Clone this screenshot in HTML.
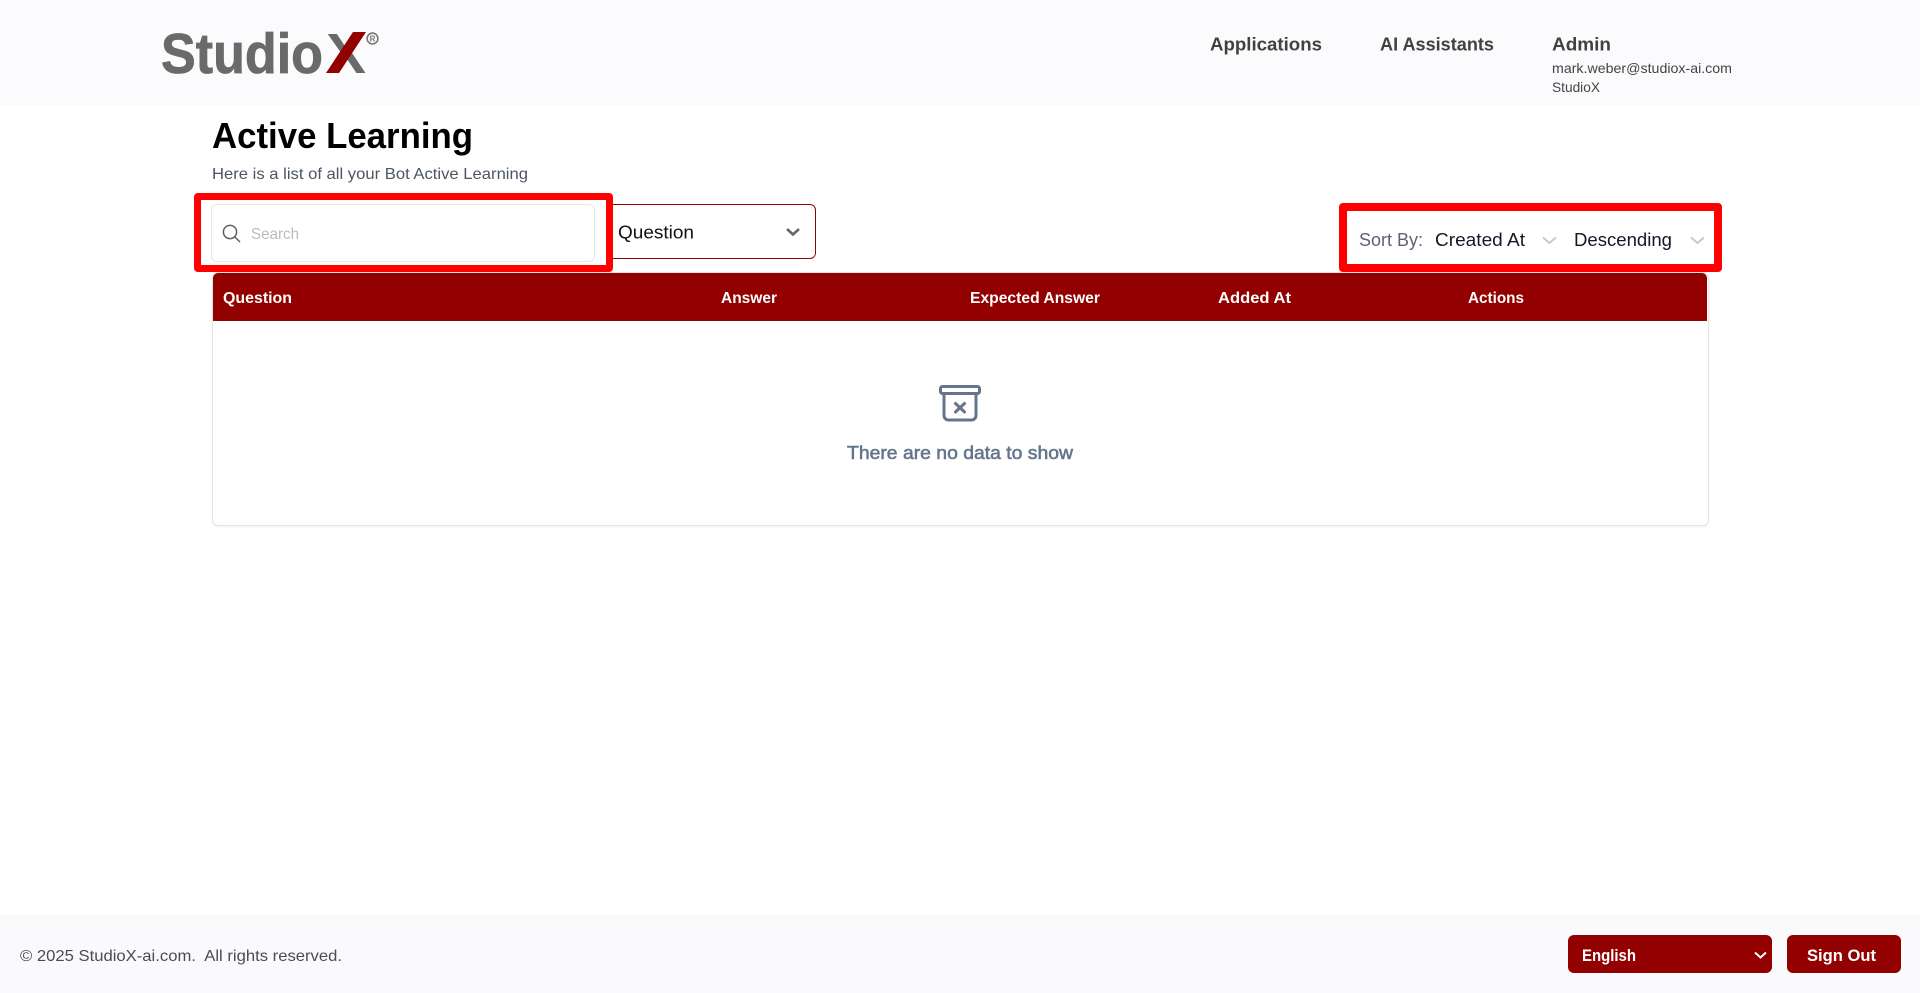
<!DOCTYPE html>
<html lang="en">
<head>
<meta charset="utf-8">
<title>Active Learning</title>
<style>
html,body{margin:0;padding:0;width:1920px;height:993px;overflow:hidden;background:#fff;font-family:"Liberation Sans",sans-serif}
.b{position:absolute;box-sizing:border-box}
svg{position:absolute;left:0;top:0}
text{font-family:"Liberation Sans",sans-serif}
.w{font-weight:700}
</style>
</head>
<body>
<header class="b" style="left:0;top:0;width:1920px;height:106px;background:#fbfbfe"></header>
<footer class="b" style="left:0;top:915px;width:1920px;height:78px;background:#fafafd"></footer>

<div class="b" style="left:212px;top:272px;width:1497px;height:254px;border:1px solid #e2e4e9;border-radius:6px;box-shadow:0 1px 2px rgba(0,0,0,.06);background:#fff"></div>
<div class="b" style="left:213px;top:273px;width:1494px;height:48px;background:#920000;border-radius:5px 5px 0 0"></div>

<div class="b" style="left:590px;top:204px;width:226px;height:55px;border:1px solid #920000;border-radius:6px;background:#fff"></div>
<div class="b" style="left:194px;top:193px;width:419px;height:79px;border:7.5px solid #fe0000;border-radius:4px;background:#fff"></div>
<div class="b" style="left:211px;top:204px;width:384px;height:58px;border:1px solid #e5e7eb;border-radius:6px;background:#fff"></div>
<div class="b" style="left:1339px;top:203px;width:383px;height:69px;border:8px solid #fe0000;border-radius:4px"></div>

<div class="b" style="left:1568px;top:935px;width:204px;height:38px;background:#920000;border-radius:6px"></div>
<div class="b" style="left:1787px;top:935px;width:114px;height:38px;background:#920000;border-radius:6px"></div>

<svg width="1920" height="993" viewBox="0 0 1920 993" xmlns="http://www.w3.org/2000/svg">
  <!-- logo -->
  <text x="161" y="73" font-size="57" class="w" fill="#6a6a6a" stroke="#6a6a6a" stroke-width=".8" textLength="162" lengthAdjust="spacingAndGlyphs">Studio</text>
  <text x="326" y="73" font-size="57" class="w" fill="#6a6a6a" textLength="40" lengthAdjust="spacingAndGlyphs">X</text>
  <polygon points="353,32 366,32 339,73 326,73" fill="#920000"/>
  <circle cx="372.5" cy="38.5" r="5.4" fill="none" stroke="#777" stroke-width="1.6"/>
  <text x="369.6" y="41.6" font-size="8" class="w" fill="#777" textLength="5.8" lengthAdjust="spacingAndGlyphs">R</text>

  <!-- nav -->
  <text x="1210" y="50.5" font-size="18" class="w" fill="#454040" textLength="112" lengthAdjust="spacingAndGlyphs">Applications</text>
  <text x="1380" y="50.5" font-size="18" class="w" fill="#454040" textLength="114" lengthAdjust="spacingAndGlyphs">AI Assistants</text>
  <text x="1552" y="50.5" font-size="18" class="w" fill="#454040" textLength="59" lengthAdjust="spacingAndGlyphs">Admin</text>
  <text x="1552" y="73" font-size="14" fill="#444" textLength="180" lengthAdjust="spacingAndGlyphs">mark.weber@studiox-ai.com</text>
  <text x="1552" y="92" font-size="14" fill="#444" textLength="48" lengthAdjust="spacingAndGlyphs">StudioX</text>

  <!-- title -->
  <text x="212" y="148" font-size="36" class="w" fill="#000" textLength="261" lengthAdjust="spacingAndGlyphs">Active Learning</text>
  <text x="212" y="179" font-size="16" fill="#4b5563" textLength="316" lengthAdjust="spacingAndGlyphs">Here is a list of all your Bot Active Learning</text>

  <!-- search -->
  <g fill="none" stroke="#5f6368" stroke-width="1.5" stroke-linecap="round">
    <circle cx="230" cy="232" r="6.6"/>
    <path d="M235 237l4.6 4.6"/>
  </g>
  <text x="251" y="239" font-size="16" fill="#b9bcc2" textLength="48" lengthAdjust="spacingAndGlyphs">Search</text>

  <!-- select -->
  <text x="618" y="238.5" font-size="18" fill="#111" textLength="76" lengthAdjust="spacingAndGlyphs">Question</text>
  <path d="M787 229l6 5.5 6-5.5" fill="none" stroke="#666" stroke-width="2.6"/>

  <!-- sort -->
  <text x="1359" y="246" font-size="18" fill="#5b6472" textLength="64" lengthAdjust="spacingAndGlyphs">Sort By:</text>
  <text x="1435" y="246" font-size="18" fill="#111827" textLength="90" lengthAdjust="spacingAndGlyphs">Created At</text>
  <path d="M1543 237.5l6.5 5.5 6.5-5.5" fill="none" stroke="#c6c9d1" stroke-width="2"/>
  <text x="1574" y="246" font-size="18" fill="#111827" textLength="98" lengthAdjust="spacingAndGlyphs">Descending</text>
  <path d="M1691 237.5l6.5 5.5 6.5-5.5" fill="none" stroke="#c6c9d1" stroke-width="2"/>

  <!-- table head -->
  <g font-size="16" class="w" fill="#fff">
    <text x="223" y="303" class="w" textLength="69" lengthAdjust="spacingAndGlyphs">Question</text>
    <text x="721" y="303" class="w" textLength="56" lengthAdjust="spacingAndGlyphs">Answer</text>
    <text x="970" y="303" class="w" textLength="130" lengthAdjust="spacingAndGlyphs">Expected Answer</text>
    <text x="1218" y="303" class="w" textLength="73" lengthAdjust="spacingAndGlyphs">Added At</text>
    <text x="1468" y="303" class="w" textLength="56" lengthAdjust="spacingAndGlyphs">Actions</text>
  </g>

  <!-- empty state -->
  <g fill="none" stroke="#64748b" stroke-width="3" stroke-linecap="round" stroke-linejoin="round">
    <rect x="940.5" y="386.5" width="39" height="7" rx="2"/>
    <path d="M944 394v21.5a4.5 4.5 0 0 0 4.5 4.5h23a4.5 4.5 0 0 0 4.5-4.5V394"/>
    <path d="M955.5 403.5l9 8.5M964.5 403.5l-9 8.5"/>
  </g>
  <text x="847" y="459" font-size="18" fill="#64748b" stroke="#64748b" stroke-width=".55" textLength="226" lengthAdjust="spacingAndGlyphs">There are no data to show</text>

  <!-- footer -->
  <text x="20" y="961" font-size="16" fill="#474c55" textLength="322" lengthAdjust="spacingAndGlyphs" xml:space="preserve">© 2025 StudioX-ai.com.  All rights reserved.</text>
  <text x="1582" y="961" font-size="17" class="w" fill="#fff" textLength="54" lengthAdjust="spacingAndGlyphs">English</text>
  <path d="M1755 952.5l5.5 5 5.5-5" fill="none" stroke="#fff" stroke-width="2"/>
  <text x="1807" y="961" font-size="17" class="w" fill="#fff" textLength="69" lengthAdjust="spacingAndGlyphs">Sign Out</text>
</svg>
</body>
</html>
